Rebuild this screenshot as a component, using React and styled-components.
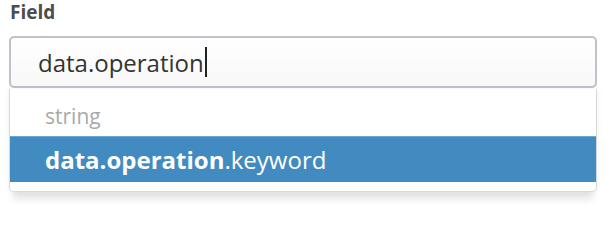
import React from "react";
import styled, { createGlobalStyle } from "styled-components";

const GlobalStyle = createGlobalStyle`
  html, body {
    margin: 0;
    padding: 0;
    background: #ffffff;
  }
  body {
    font-family: "Open Sans", "Liberation Sans", sans-serif;
  }
`;

const Page = styled.div`
  width: 616px;
  height: 228px;
  padding: 0 20px 0 9px;
  box-sizing: border-box;
`;

const Label = styled.div`
  font-size: 19px;
  font-weight: 700;
  color: #4d4d4d;
  line-height: 24px;
  margin: 0 0 12px 1px;
`;

const Combo = styled.div`
  position: relative;
  width: 588px;
`;

const Input = styled.div`
  height: 52px;
  box-sizing: border-box;
  border: 2px solid #bcc3ca;
  border-radius: 5px;
  background: linear-gradient(#ffffff, #f8f8f8);
  padding: 0 0 0 27px;
  display: flex;
  align-items: center;
  font-size: 24px;
  color: #333;
`;

const Caret = styled.span`
  display: inline-block;
  width: 2px;
  height: 30px;
  background: #222;
  margin-left: 1px;
`;

const Menu = styled.div`
  margin-top: 1px;
  background: #fff;
  border: 1px solid #d6d9dc;
  border-top: none;
  border-radius: 0 0 5px 5px;
  padding: 8px 0 9px;
  box-shadow: 0 12px 6px -4px rgba(0, 0, 0, 0.09), 0 0 7px rgba(0, 0, 0, 0.06);
`;

const GroupTitle = styled.div`
  padding-left: 35px;
  font-size: 21px;
  line-height: 39px;
  color: #a9a9a9;
`;

const Option = styled.div`
  padding-left: 35px;
  height: 45px;
  display: flex;
  align-items: center;
  font-size: 24px;
  color: ${(p) => (p.active ? "#fff" : "#333")};
  background: ${(p) => (p.active ? "#428bc1" : "transparent")};
  border-top: 1px solid ${(p) => (p.active ? "#6aa7d4" : "transparent")};

  b {
    font-weight: 700;
  }
`;

export default function App() {
  return (
    <>
      <GlobalStyle />
      <Page>
        <Label>Field</Label>
        <Combo>
          <Input>
            data.operation
            <Caret />
          </Input>
          <Menu>
            <GroupTitle>string</GroupTitle>
            <Option active>
              <b>data.operation</b>.keyword
            </Option>
          </Menu>
        </Combo>
      </Page>
    </>
  );
}
